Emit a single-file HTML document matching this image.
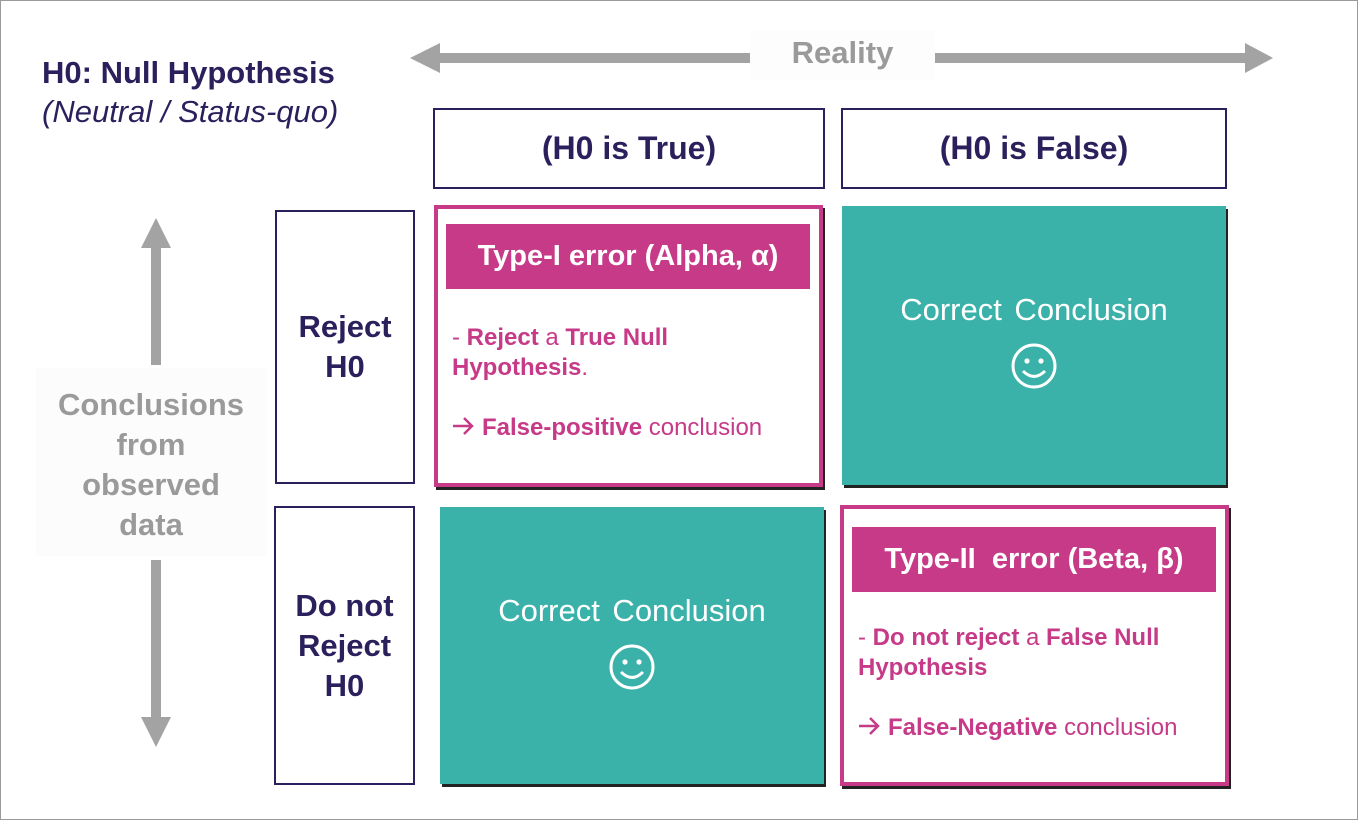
<!DOCTYPE html>
<html><head><meta charset="utf-8"><style>
*{margin:0;padding:0;box-sizing:border-box}
body{width:1358px;height:820px;background:#fff;position:relative;overflow:hidden;font-family:"Liberation Sans",Arial,sans-serif}
.frame{position:absolute;left:0;top:0;width:1358px;height:820px;border:1px solid #9a9a9a}
.a{position:absolute;white-space:nowrap}
.nav{color:#2b1f5c}
.box{position:absolute;border:2px solid #2b1f5c;background:#fff;display:flex;align-items:center;justify-content:center;text-align:center;font-weight:bold;color:#2b1f5c}
.teal{position:absolute;background:#3ab2aa;color:#fff;text-align:center;box-shadow:2px 3px 0 #222}
.err{position:absolute;border:4px solid #c63a88;background:#fff;box-shadow:2px 3px 0 #222}
.bar{position:absolute;background:#c63a88;color:#fff;font-weight:bold;font-size:29px;display:flex;align-items:center;justify-content:center;white-space:nowrap}
.txt{position:absolute;color:#c63a88;font-size:24px;line-height:30px;white-space:nowrap}
.txt b{font-weight:bold}
.cc{position:absolute;left:0;right:0;font-size:31px;word-spacing:4px}
.sm{position:absolute;left:50%;margin-left:-24px}
.arr{display:inline-block;width:22px;margin-right:8px}
</style></head><body>
<div class="frame"></div>
<div class="a nav" style="left:42px;top:55px;font-size:31px;font-weight:bold">H0: Null Hypothesis</div>
<div class="a nav" style="left:42px;top:94px;font-size:31px;font-style:italic">(Neutral / Status-quo)</div>

<svg class="a" style="left:405px;top:38px" width="875" height="42">
<polygon points="5,20 35,5 35,15 345,15 345,25 35,25 35,35" fill="#a3a3a3"/>
<polygon points="868,20 840,5 840,15 530,15 530,25 840,25 840,35" fill="#a3a3a3"/>
</svg>
<div class="a" style="left:750px;top:30px;width:185px;height:50px;background:#fdfdfd;color:#9a9a9a;font-weight:bold;font-size:31px;text-align:center;line-height:46px">Reality</div>

<div class="box" style="left:433px;top:108px;width:392px;height:81px;font-size:32px">(H0 is True)</div>
<div class="box" style="left:841px;top:108px;width:386px;height:81px;font-size:32px">(H0 is False)</div>

<svg class="a" style="left:138px;top:215px" width="36" height="535">
<polygon points="18,3 3,33 13,33 13,150 23,150 23,33 33,33" fill="#a3a3a3"/>
<polygon points="18,532 3,502 13,502 13,345 23,345 23,502 33,502" fill="#a3a3a3"/>
</svg>
<div class="a" style="left:36px;top:368px;width:230px;height:188px;background:#fcfcfc;color:#9a9a9a;font-weight:bold;font-size:31px;line-height:40px;text-align:center;padding-top:17px">Conclusions<br>from<br>observed<br>data</div>

<div class="box" style="left:275px;top:210px;width:140px;height:274px;font-size:31px;line-height:40px">Reject<br>H0</div>
<div class="box" style="left:274px;top:506px;width:141px;height:279px;font-size:31px;line-height:40px">Do not<br>Reject<br>H0</div>

<div class="err" style="left:434px;top:205px;width:389px;height:282px"></div>
<div class="bar" style="left:446px;top:224px;width:364px;height:65px">Type-I error (Alpha, α)</div>
<div class="txt" style="left:452px;top:323px">- <b>Reject</b> a <b>True Null<br>Hypothesis</b>.</div>
<div class="txt" style="left:452px;top:413px"><svg class="arr" width="22" height="18" viewBox="0 0 22 18"><path d="M1 9H20M12 1L20 9L12 17" stroke="#c63a88" stroke-width="2.5" fill="none"/></svg><b>False-positive</b> conclusion</div>

<div class="teal" style="left:842px;top:206px;width:384px;height:279px">
<div class="cc" style="top:86px">Correct Conclusion</div>
<svg class="sm" style="top:136px" width="48" height="48" viewBox="0 0 48 48"><circle cx="24" cy="24" r="21" stroke="#fff" stroke-width="3" fill="none"/><circle cx="17" cy="19" r="2.6" fill="#fff"/><circle cx="31" cy="19" r="2.6" fill="#fff"/><path d="M13 29Q24 40 35 29" stroke="#fff" stroke-width="3" fill="none"/></svg></div>

<div class="teal" style="left:440px;top:507px;width:384px;height:277px">
<div class="cc" style="top:86px">Correct Conclusion</div>
<svg class="sm" style="top:136px" width="48" height="48" viewBox="0 0 48 48"><circle cx="24" cy="24" r="21" stroke="#fff" stroke-width="3" fill="none"/><circle cx="17" cy="19" r="2.6" fill="#fff"/><circle cx="31" cy="19" r="2.6" fill="#fff"/><path d="M13 29Q24 40 35 29" stroke="#fff" stroke-width="3" fill="none"/></svg></div>

<div class="err" style="left:840px;top:505px;width:389px;height:281px"></div>
<div class="bar" style="left:852px;top:527px;width:364px;height:65px">Type-II&nbsp; error (Beta, β)</div>
<div class="txt" style="left:858px;top:623px">- <b>Do not reject</b> a <b>False Null<br>Hypothesis</b></div>
<div class="txt" style="left:858px;top:713px"><svg class="arr" width="22" height="18" viewBox="0 0 22 18"><path d="M1 9H20M12 1L20 9L12 17" stroke="#c63a88" stroke-width="2.5" fill="none"/></svg><b>False-Negative</b> conclusion</div>
</body></html>
